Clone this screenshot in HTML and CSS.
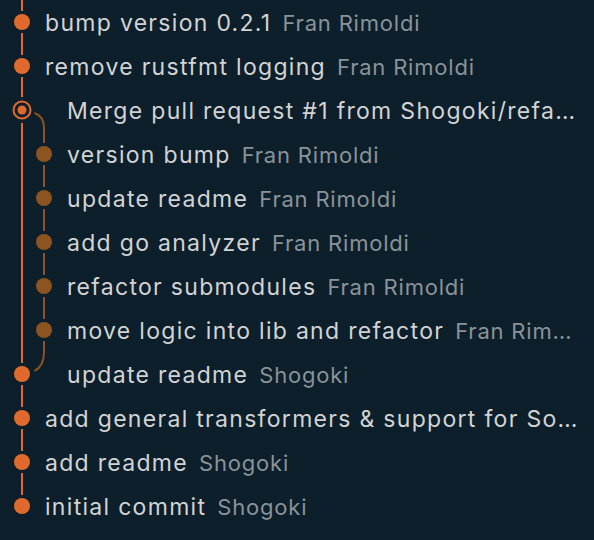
FILE: index.html
```html
<!DOCTYPE html>
<html>
<head>
<meta charset="utf-8">
<link rel="stylesheet" href="styles.css">
</head>
<body>
<div class="history">
  <svg class="graph" width="60" height="540" viewBox="0 0 60 540" aria-hidden="true">
    <g class="main" stroke-width="2" fill="none">
      <line x1="22" y1="0" x2="22" y2="11"/>
      <line x1="22" y1="33" x2="22" y2="55"/>
      <line x1="22" y1="77" x2="22" y2="97"/>
      <line x1="22" y1="123" x2="22" y2="363"/>
      <line x1="22" y1="385" x2="22" y2="407"/>
      <line x1="22" y1="429" x2="22" y2="451"/>
      <line x1="22" y1="473" x2="22" y2="495"/>
    </g>
    <g class="branch" stroke-width="2" fill="none">
      <path d="M34.5 113 C40.5 115 44 120 44 128 V143"/>
      <line x1="44" y1="165" x2="44" y2="187"/>
      <line x1="44" y1="209" x2="44" y2="231"/>
      <line x1="44" y1="253" x2="44" y2="275"/>
      <line x1="44" y1="297" x2="44" y2="319"/>
      <path d="M44 341 V352 C44 362 40.5 368 34.5 371"/>
    </g>
    <g class="main-dot">
      <circle cx="22" cy="22" r="8"/>
      <circle cx="22" cy="66" r="8"/>
      <circle cx="22" cy="374" r="8"/>
      <circle cx="22" cy="418" r="8"/>
      <circle cx="22" cy="462" r="8"/>
      <circle cx="22" cy="506" r="8"/>
      <circle cx="22" cy="110" r="4.5"/>
    </g>
    <circle class="merge-ring" cx="22" cy="110" r="8.5" stroke-width="2" fill="none"/>
    <g class="branch-dot">
      <circle cx="44" cy="154" r="8"/>
      <circle cx="44" cy="198" r="8"/>
      <circle cx="44" cy="242" r="8"/>
      <circle cx="44" cy="286" r="8"/>
      <circle cx="44" cy="330" r="8"/>
    </g>
  </svg>
  <ul class="commits">
    <li class="commit"><span class="msg">bump version 0.2.1</span><span class="author">Fran Rimoldi</span></li>
    <li class="commit"><span class="msg">remove rustfmt logging</span><span class="author">Fran Rimoldi</span></li>
    <li class="commit lane2"><span class="msg">Merge pull request #1 from Shogoki/refactor-submodules</span><span class="author">Fran Rimoldi</span></li>
    <li class="commit lane2"><span class="msg">version bump</span><span class="author">Fran Rimoldi</span></li>
    <li class="commit lane2"><span class="msg">update readme</span><span class="author">Fran Rimoldi</span></li>
    <li class="commit lane2"><span class="msg">add go analyzer</span><span class="author">Fran Rimoldi</span></li>
    <li class="commit lane2"><span class="msg">refactor submodules</span><span class="author">Fran Rimoldi</span></li>
    <li class="commit lane2"><span class="msg">move logic into lib and refactor</span><span class="author">Fran Rimoldi</span></li>
    <li class="commit lane2"><span class="msg">update readme</span><span class="author">Shogoki</span></li>
    <li class="commit"><span class="msg">add general transformers &amp; support for Solidity</span><span class="author">Shogoki</span></li>
    <li class="commit"><span class="msg">add readme</span><span class="author">Shogoki</span></li>
    <li class="commit"><span class="msg">initial commit</span><span class="author">Shogoki</span></li>
  </ul>
</div>
</body>
</html>
```

FILE: styles.css
```css
html, body {
  margin: 0;
  padding: 0;
  background: #0c1f2b;
  height: 100%;
  overflow: hidden;
}

.history {
  position: relative;
  width: 594px;
  height: 540px;
  font-family: Inter, "Noto Sans", sans-serif;
}

.graph {
  position: absolute;
  left: 0;
  top: 0;
}

.main line { stroke: #e06a2b; }
.main-dot circle { fill: #e06a2b; }
.merge-ring { stroke: #e06a2b; }
.branch line, .branch path { stroke: #8d5320; }
.branch-dot circle { fill: #8d5320; }

.commits {
  list-style: none;
  margin: 0;
  padding: 0 14px 0 0;
}

.commit {
  display: flex;
  align-items: center;
  height: 44px;
  padding-left: 45px;
  padding-top: 2px;
  box-sizing: border-box;
  white-space: nowrap;
  min-width: 0;
}

.commit.lane2 {
  padding-left: 67px;
}

.msg {
  color: #d2d3d4;
  font-size: 23px;
  letter-spacing: 1.3px;
  flex: 0 1 auto;
  min-width: 0;
  overflow: hidden;
  text-overflow: ellipsis;
}

.author {
  color: #8a9399;
  font-size: 22px;
  letter-spacing: 0.8px;
  flex: 0 100000 auto;
  min-width: 0;
  overflow: hidden;
  text-overflow: ellipsis;
}

.author::before {
  content: "";
  display: inline-block;
  width: 11px;
}
```
